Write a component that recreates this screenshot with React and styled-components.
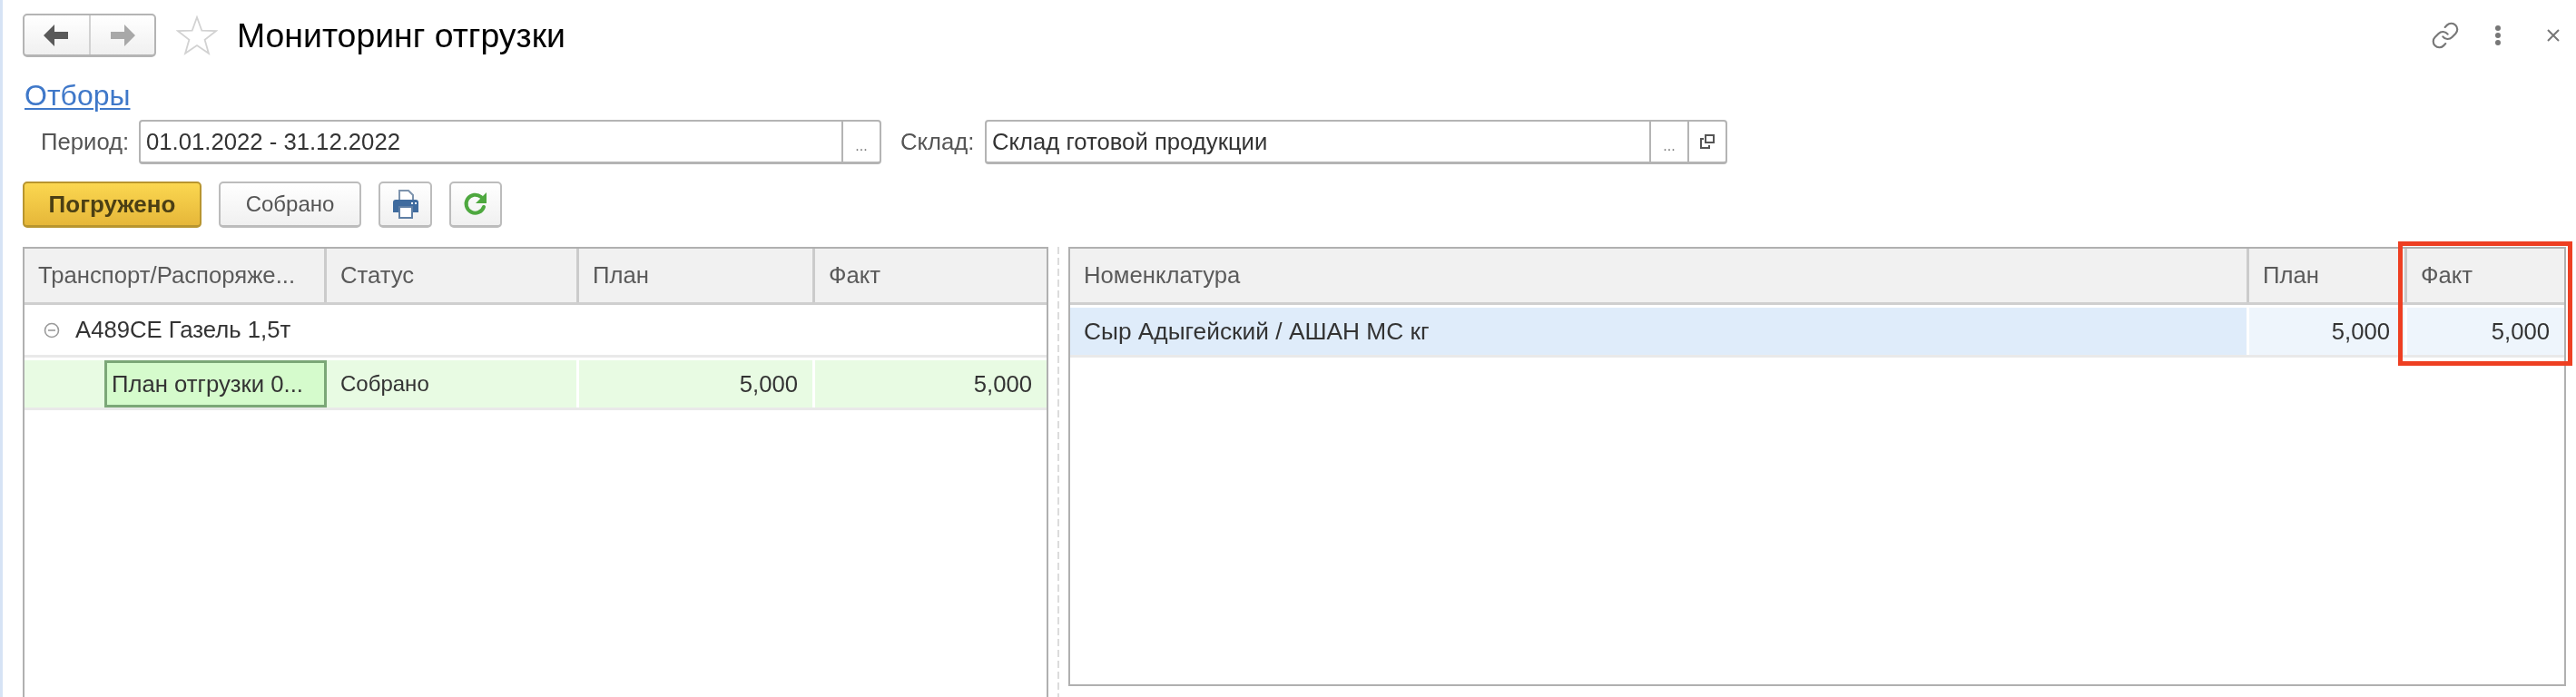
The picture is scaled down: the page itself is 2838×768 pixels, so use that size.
import React from 'react';
import styled, { createGlobalStyle } from 'styled-components';

const GlobalStyle = createGlobalStyle`
  html, body {
    margin: 0;
    padding: 0;
    background: #fff;
  }
`;

const Page = styled.div`
  position: relative;
  box-sizing: border-box;
  width: 2838px;
  height: 768px;
  overflow: hidden;
  padding: 15px 0 0 25px;
  background: #fff;
  font-family: "Liberation Sans", Arial, sans-serif;
  font-size: 25.7px;
  color: #3c3c3c;
  filter: blur(0.6px);

  &::before {
    content: '';
    position: absolute;
    left: 0;
    top: 0;
    bottom: 0;
    width: 3px;
    background: #d6e3f5;
  }
`;

const Header = styled.div`
  display: flex;
  align-items: center;
  height: 48px;
`;

const NavGroup = styled.div`
  display: flex;
  box-sizing: border-box;
  width: 147px;
  height: 48px;
  border: 2px solid #b4b4b4;
  border-bottom-width: 3px;
  border-radius: 5px;
  background: linear-gradient(#fff, #f0f0f0);
`;

const NavButton = styled.div`
  flex: 1;
  display: flex;
  align-items: center;
  justify-content: center;

  & + & {
    border-left: 2px solid #d2d2d2;
  }
`;

const StarIcon = styled.svg`
  width: 46px;
  height: 44px;
  margin-left: 22px;
  flex: none;
`;

const Title = styled.h1`
  margin: 0 0 0 21px;
  font-size: 37.4px;
  font-weight: 400;
  color: #000;
  white-space: nowrap;
`;

const HeaderActions = styled.div`
  margin-left: auto;
  display: flex;
  align-items: center;
  gap: 38px;
  padding-right: 17px;
  color: #777;
`;

const CloseIcon = styled.svg`
  width: 16px;
  height: 16px;
  margin-left: 11px;
`;

const FilterLink = styled.a`
  display: block;
  width: max-content;
  height: 32px;
  margin: 27px 0 0 2px;
  font-size: 32px;
  line-height: 30px;
  color: #3f78c9;
  text-decoration: underline;
  text-decoration-thickness: 2px;
  text-underline-offset: 3px;
`;

const FieldRow = styled.div`
  display: flex;
  align-items: center;
  margin-top: 10px;
`;

const FieldLabel = styled.label`
  box-sizing: border-box;
  width: ${p => p.$width}px;
  margin-left: ${p => p.$offset}px;
  color: #555;
  white-space: nowrap;
`;

const Field = styled.div`
  display: flex;
  box-sizing: border-box;
  width: ${p => p.$width}px;
  height: 49px;
  border: 2px solid #b4b4b4;
  border-bottom-width: 3px;
  border-radius: 4px;
`;

const FieldValue = styled.div`
  flex: 1;
  padding-left: 6px;
  line-height: 44px;
  color: #333;
`;

const FieldButton = styled.div`
  width: 40px;
  display: flex;
  align-items: center;
  justify-content: center;
  border-left: 2px solid #b4b4b4;
  color: #777;
`;

const Dots = styled.span`
  font-size: 16px;
  line-height: 1;
  padding-top: 10px;
`;

const Toolbar = styled.div`
  display: flex;
  align-items: stretch;
  gap: 19px;
  height: 51px;
  margin-top: 19px;
`;

const Button = styled.div`
  box-sizing: border-box;
  width: ${p => p.$width}px;
  display: flex;
  align-items: center;
  justify-content: center;
  border: 2px solid ${p => (p.$primary ? '#b8952f' : '#bcbcbc')};
  border-bottom-width: 3px;
  border-radius: 5px;
  background: ${p => (p.$primary ? 'linear-gradient(#fbd750, #e6b739)' : 'linear-gradient(#fff, #f0f0f0)')};
  font-size: ${p => (p.$primary ? 26 : 24)}px;
  font-weight: ${p => (p.$primary ? 700 : 400)};
  color: ${p => (p.$primary ? '#4b3f14' : '#555')};
`;

const Tables = styled.div`
  display: flex;
  align-items: flex-start;
  margin-top: 21px;
`;

const Table = styled.div`
  box-sizing: border-box;
  width: ${p => p.$width}px;
  height: ${p => p.$height}px;
  border: 2px solid #b0b0b0;
`;

const Splitter = styled.div`
  width: 2px;
  height: 500px;
  margin: 0 10px;
  background: repeating-linear-gradient(#dcdcdc 0 8px, transparent 8px 12px);
`;

const Row = styled.div`
  display: grid;
  grid-template-columns: ${p => p.$columns};
  height: ${p => p.$height}px;
  border-bottom: 3px solid ${p => (p.$head ? '#cfcfcf' : '#e9e9e9')};
  box-sizing: border-box;
`;

const HeadCell = styled.div`
  display: flex;
  align-items: center;
  padding-left: 15px;
  background: #f1f1f1;
  border-right: 3px solid #cbcbcb;
  color: #5a5a5a;
  white-space: nowrap;
  overflow: hidden;

  &:last-child {
    border-right: 0;
  }
`;

const Cell = styled.div`
  display: flex;
  align-items: center;
  justify-content: ${p => (p.$right ? 'flex-end' : 'flex-start')};
  padding: 0 ${p => (p.$right ? 16 : 0)}px 0 ${p => (p.$right ? 0 : 15)}px;
  margin-top: ${p => (p.$tint ? 3 : 0)}px;
  background: ${p => p.$tint || 'transparent'};
  border-right: 3px solid #fff;
  font-size: ${p => p.$size || 25.7}px;
  color: #333;
  white-space: nowrap;
  overflow: hidden;

  &:last-child {
    border-right: 0;
  }
`;

const TreeCell = styled.div`
  display: flex;
  align-items: center;
  gap: 17px;
  padding-left: 21px;
  grid-column: 1 / -1;
  color: #333;
  white-space: nowrap;
`;

const TreeIndent = styled.div`
  margin-top: 3px;
  background: #e8fbe3;
  padding-left: 88px;
`;

const FocusCell = styled.div`
  box-sizing: border-box;
  height: 100%;
  display: flex;
  align-items: center;
  padding-left: 5px;
  background: #d5fbcc;
  border: 3px solid #7ba777;
  color: #333;
  white-space: nowrap;
  overflow: hidden;
`;

const Marker = styled.div`
  position: absolute;
  left: 2642px;
  top: 266px;
  box-sizing: border-box;
  width: 192px;
  height: 137px;
  border: 5px solid #ee3f22;
`;

const LEFT_COLUMNS = '333px 278px 260px 1fr';
const RIGHT_COLUMNS = '1299px 174px 1fr';

const App = () => (
  <Page>
    <GlobalStyle />
    <Header>
      <NavGroup>
        <NavButton>
          <svg width="30" height="26" viewBox="0 0 30 26">
            <path d="M1 13 13 1v8h15v8H13v8z" fill="#595959" />
          </svg>
        </NavButton>
        <NavButton>
          <svg width="30" height="26" viewBox="0 0 30 26">
            <path d="M29 13 17 1v8H2v8h15v8z" fill="#a8a8a8" />
          </svg>
        </NavButton>
      </NavGroup>
      <StarIcon viewBox="0 0 46 44">
        <path
          d="M23 2 28.3 16.7 43.9 17.2 31.6 26.8 35.9 41.8 23 33 10.1 41.8 14.4 26.8 2.1 17.2 17.7 16.7z"
          fill="none"
          stroke="#d2d2d2"
          strokeWidth="1.8"
        />
      </StarIcon>
      <Title>Мониторинг отгрузки</Title>
      <HeaderActions>
        <svg width="32" height="32" viewBox="0 0 24 24" fill="none" stroke="currentColor" strokeWidth="1.6" strokeLinecap="round">
          <path d="M10 13a5 5 0 0 0 7.54.54l3-3a5 5 0 0 0-7.07-7.07l-1.72 1.71" />
          <path d="M14 11a5 5 0 0 0-7.54-.54l-3 3a5 5 0 0 0 7.07 7.07l1.71-1.71" />
        </svg>
        <svg width="8" height="24" viewBox="0 0 8 24" fill="currentColor">
          <circle cx="4" cy="4" r="3" />
          <circle cx="4" cy="12" r="3" />
          <circle cx="4" cy="20" r="3" />
        </svg>
        <CloseIcon viewBox="0 0 16 16" stroke="currentColor" strokeWidth="2">
          <path d="M2 2l12 12M14 2 2 14" />
        </CloseIcon>
      </HeaderActions>
    </Header>

    <FilterLink>Отборы</FilterLink>

    <FieldRow>
      <FieldLabel $offset={20} $width={108}>Период:</FieldLabel>
      <Field $width={818}>
        <FieldValue>01.01.2022 - 31.12.2022</FieldValue>
        <FieldButton><Dots>...</Dots></FieldButton>
      </Field>
      <FieldLabel $offset={21} $width={93}>Склад:</FieldLabel>
      <Field $width={818}>
        <FieldValue>Склад готовой продукции</FieldValue>
        <FieldButton><Dots>...</Dots></FieldButton>
        <FieldButton>
          <svg width="18" height="18" viewBox="0 0 18 18" fill="none" stroke="#555" strokeWidth="2">
            <rect x="7" y="2" width="9" height="8" />
            <path d="M5 6H2v10h9v-3" />
          </svg>
        </FieldButton>
      </Field>
    </FieldRow>

    <Toolbar>
      <Button $primary $width={197}>Погружено</Button>
      <Button $width={157}>Собрано</Button>
      <Button $width={59}>
        <svg width="30" height="32" viewBox="0 0 30 32">
          <path d="M8 1h10l5 5v8H8z" fill="#fff" stroke="#7d93ad" strokeWidth="2" />
          <path d="M4 11h22a3 3 0 0 1 3 3v11H1V14a3 3 0 0 1 3-3z" fill="#3f6b9e" />
          <rect x="8" y="19" width="14" height="12" fill="#fff" stroke="#5f7fa5" strokeWidth="2" />
          <rect x="21" y="14" width="2" height="2" fill="#fff" />
          <rect x="25" y="14" width="2" height="2" fill="#fff" />
        </svg>
      </Button>
      <Button $width={58}>
        <svg width="28" height="28" viewBox="0 0 28 28" fill="none">
          <path d="M23 17a10 10 0 1 1-3-11" stroke="#4ea83f" strokeWidth="4" strokeLinecap="round" />
          <path d="M26 1v12H14z" fill="#4ea83f" />
        </svg>
      </Button>
    </Toolbar>

    <Tables>
      <Table $width={1130} $height={500}>
        <Row $head $columns={LEFT_COLUMNS} $height={62}>
          <HeadCell>Транспорт/Распоряже...</HeadCell>
          <HeadCell>Статус</HeadCell>
          <HeadCell>План</HeadCell>
          <HeadCell>Факт</HeadCell>
        </Row>
        <Row $columns={LEFT_COLUMNS} $height={58}>
          <TreeCell>
            <svg width="18" height="18" viewBox="0 0 18 18" fill="none" stroke="#9a9a9a" strokeWidth="1.6">
              <circle cx="9" cy="9" r="7.5" />
              <path d="M5 9h8" />
            </svg>
            А489СЕ Газель 1,5т
          </TreeCell>
        </Row>
        <Row $columns={LEFT_COLUMNS} $height={58}>
          <TreeIndent>
            <FocusCell>План отгрузки 0...</FocusCell>
          </TreeIndent>
          <Cell $tint="#e8fbe3" $size={24}>Собрано</Cell>
          <Cell $tint="#e8fbe3" $right>5,000</Cell>
          <Cell $tint="#e8fbe3" $right>5,000</Cell>
        </Row>
      </Table>
      <Splitter />
      <Table $width={1650} $height={484}>
        <Row $head $columns={RIGHT_COLUMNS} $height={62}>
          <HeadCell>Номенклатура</HeadCell>
          <HeadCell>План</HeadCell>
          <HeadCell>Факт</HeadCell>
        </Row>
        <Row $columns={RIGHT_COLUMNS} $height={58}>
          <Cell $tint="#dfecfa" $size={26.3}>Сыр Адыгейский / АШАН МС кг</Cell>
          <Cell $tint="#eef5fc" $right>5,000</Cell>
          <Cell $tint="#eef5fc" $right>5,000</Cell>
        </Row>
      </Table>
    </Tables>

    <Marker />
  </Page>
);

export default App;
